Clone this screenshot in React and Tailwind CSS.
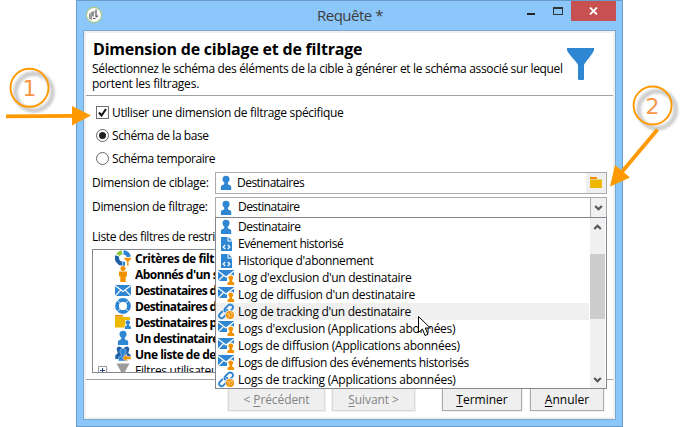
import React from "react";

function PersonIcon() {
  return (
    <svg width="16" height="16" viewBox="0 0 16 16" className="shrink-0" fill="#2f86d2">
      <path d="M8 .8c2.400 0 3.600 1.500 3.600 3.400 0 1.500-.9 2.700-1.900 3.600.1 1.400.5 2 1.500 2.300 1.300.4 2 .9 2 2V15H2.900v-2.900c0-1.100.7-1.600 2-2 1-.3 1.400-.9 1.500-2.300-1-.9-1.900-2.100-1.900-3.600C4.500 2.300 5.600.8 8 .8z" />
    </svg>
  );
}

function FileIcon() {
  return (
    <svg width="16" height="16" viewBox="0 0 16 16" className="shrink-0">
      <path d="M3 1h6.500v4.500H14V15H3z" fill="#2f86d2" />
      <path d="M10.500 1L14 4.500h-3.500z" fill="#2f86d2" />
      <path d="M7.200 9L5.200 11l2 2M9.800 9l2 2-2 2" fill="none" stroke="#fff" strokeWidth="1.200" />
    </svg>
  );
}

function MailPersonIcon() {
  return (
    <svg width="17" height="17" viewBox="0 0 17 17" className="shrink-0">
      <path d="M0 1h16v11H0z" fill="#2f86d2" />
      <path d="M0 2l8 6 8-6M0 12l5.500-5.500M16 12l-5.500-5.500" fill="none" stroke="#fff" strokeWidth="1.200" />
      <path d="M9 12.500V9.500A3.600 3.600 0 0 1 16.500 9v3.500z" fill="#fff" />
      <path d="M12.800 6.500a2.500 2.500 0 0 1 1.300 4.600v1.400l2.100 1.200V16H9.500v-2.300l2-1.200v-1.400a2.500 2.500 0 0 1 1.300-4.600z" fill="#f39200" />
    </svg>
  );
}

function LinkIcon() {
  return (
    <svg width="17" height="17" viewBox="0 0 17 17" className="shrink-0">
      <g fill="none" stroke="#2f86d2" strokeWidth="1.900" strokeLinecap="round">
        <path d="M7 8.500C6 7 6.500 6 7.500 5l2.600-2.600c1.200-1.200 2.800-1.100 3.900-.2 1.200 1.200 1.100 2.800.2 3.900l-2.300 2.300" />
        <path d="M9 6.800c1.200 1.400 1 2.600 0 3.700l-3.500 3.900c-1.100 1.100-2.500 1.100-3.600.2-1.200-1.200-1-2.600-.1-3.600l2.500-2.500" />
      </g>
      <circle cx="12" cy="12" r="4.700" fill="#fff" />
      <circle cx="12" cy="12" r="4.100" fill="#f39200" />
      <path d="M9 10.500l2 .5.500 2-1 1.500M12.500 8.500l.5 1.700 2 .8M13 13.500l1.500-1" fill="none" stroke="#fff" strokeOpacity=".8" strokeWidth=".8" />
    </svg>
  );
}

function CriteriaIcon() {
  return (
    <svg width="17" height="17" viewBox="0 0 17 17" className="shrink-0">
      <g fill="none" strokeWidth="4.200">
        <path d="M7 2.300A5.800 5.800 0 0 0 2.900 5" stroke="#8bc63f" />
        <path d="M2.300 6A5.800 5.800 0 0 0 7 13.700" stroke="#1d5fa8" />
        <path d="M8.500 2.300A5.800 5.800 0 0 1 13.800 7" stroke="#2f86d2" />
        <path d="M7.500 13.700h2.500" stroke="#2f86d2" />
      </g>
      <path d="M9 7.500h7.500v1.200l-2.700 3V16h-2v-4.300L9 8.700z" fill="#f39200" stroke="#fff" strokeWidth=".6" />
    </svg>
  );
}

function ManIcon() {
  return (
    <svg width="16" height="16" viewBox="0 0 16 16" className="shrink-0" fill="#f39200">
      <circle cx="8" cy="2.600" r="2.500" />
      <path d="M4 5.500h8v5h-1.300V16H5.300v-5.500H4z" />
    </svg>
  );
}

function MailIcon() {
  return (
    <svg width="16" height="16" viewBox="0 0 16 16" className="shrink-0">
      <path d="M0 3h16v11H0z" fill="#2f86d2" />
      <path d="M0 3.500l8 6 8-6M0 14l5.500-5.700M16 14l-5.500-5.700" fill="none" stroke="#fff" strokeWidth="1.200" />
    </svg>
  );
}

function RingIcon() {
  return (
    <svg width="16" height="16" viewBox="0 0 16 16" className="shrink-0">
      <circle cx="8" cy="8" r="5.900" fill="none" stroke="#2f86d2" strokeWidth="4" />
      <path d="M2 2l12 12M14 2L2 14" stroke="#fff" strokeWidth=".8" />
      <circle cx="8" cy="8" r="3.900" fill="#fff" />
    </svg>
  );
}

function FolderPersonIcon() {
  return (
    <svg width="16" height="16" viewBox="0 0 16 16" className="shrink-0">
      <path d="M0 1h8v1.700H0z" fill="#f08c00" />
      <path d="M0 3h15v10.500H0z" fill="#edb800" />
      <path d="M9.300 16v-3.500l1-1V6H15.500v6l.5 4z" fill="#fff" />
      <path d="M12.800 6.200a2.200 2.200 0 0 1 1.200 4.100v1.100l1.900 1.300V15H9.800v-2.300l1.900-1.300v-1.100a2.200 2.200 0 0 1 1.100-4.100z" fill="#2f86d2" />
    </svg>
  );
}

function GroupIcon() {
  return (
    <svg width="16" height="16" viewBox="0 0 16 16" className="shrink-0">
      <path d="M4.500.5C2.500.5 1.300 2 1.800 4l1 3L.3 9.500V13H7V1.800zM11.500.5c2 0 3.200 1.500 2.700 3.500l-1 3 2.500 2V12H9V1.800z" fill="#1d5fa8" />
      <path d="M8 2.200c2 0 3.100 1.400 3.100 3.200 0 1.300-.6 2.400-1.500 3.200v1.200l2.900 1.600V15h-9v-3.600l2.900-1.600V8.600C5.500 7.800 4.900 6.700 4.900 5.400 4.900 3.600 6 2.200 8 2.200z" fill="#2f86d2" stroke="#cfe4f7" strokeWidth=".5" />
      <path d="M7.500 12l4.200-4v2.600H16v2.900h-4.300V16z" fill="#f39200" stroke="#fff" strokeWidth=".5" />
    </svg>
  );
}

function TriangleIcon() {
  return (
    <svg width="16" height="16" viewBox="0 0 16 16" className="shrink-0" fill="#9b9b9b">
      <path d="M1.500 1.500h13L8.500 12.500h-1z" />
    </svg>
  );
}

function Chevron({ up }) {
  return (
    <svg width="9" height="8" viewBox="0 0 9 8" fill="none" stroke="#555" strokeWidth="2.200">
      {up ? <path d="M1.200 6L4.500 2.700 7.800 6" /> : <path d="M1.200 2L4.500 5.300 7.800 2" />}
    </svg>
  );
}

const OPTIONS = [
  [PersonIcon, "Destinataire", "tracking-[-0.47px]"],
  [FileIcon, "Evénement historisé", "tracking-[-0.47px]"],
  [FileIcon, "Historique d'abonnement", "tracking-[-0.36px]"],
  [MailPersonIcon, "Log d'exclusion d'un destinataire", "tracking-[-0.3px]"],
  [MailPersonIcon, "Log de diffusion d'un destinataire", "tracking-[-0.3px]"],
  [LinkIcon, "Log de tracking d'un destinataire", "tracking-[-0.3px]"],
  [MailPersonIcon, "Logs d'exclusion (Applications abonnées)", "tracking-[-0.27px]"],
  [MailPersonIcon, "Logs de diffusion (Applications abonnées)", "tracking-[-0.25px]"],
  [MailPersonIcon, "Logs de diffusion des événements historisés", "tracking-[-0.37px]"],
  [LinkIcon, "Logs de tracking (Applications abonnées)", "tracking-[-0.25px]"],
];

const FILTERS = [
  [CriteriaIcon, "Critères de filt", "tracking-[-0.42px]"],
  [ManIcon, "Abonnés d'un s", "tracking-[-0.55px]"],
  [MailIcon, "Destinataires d", "tracking-[-0.65px]"],
  [RingIcon, "Destinataires d", "tracking-[-0.65px]"],
  [FolderPersonIcon, "Destinataires p", "tracking-[-0.65px]"],
  [PersonIcon, "Un destinataire", "tracking-[-0.65px]"],
  [GroupIcon, "Une liste de de", "tracking-[-0.5px]"],
];

function Options() {
  return (
    <div className="absolute left-[123px] top-[45px] z-10 flex h-[172px] w-[392px] border border-[#828790] bg-white">
      <ul className="w-[373px]">
        {OPTIONS.map(([Icon, label, spacing], i) => (
          <li key={i} className={`flex h-[17px] items-center ${i === 5 ? "bg-[#f0f0f0]" : ""}`}>
            <span className="ml-[2px] flex w-5 shrink-0 items-center overflow-visible">
              <Icon />
            </span>
            <span className={`whitespace-nowrap ${spacing}`}>{label}</span>
          </li>
        ))}
      </ul>
      <div className="ml-px flex w-[15px] flex-col items-center bg-[#f0f0f0]">
        <div className="flex h-[36px] items-start pt-[5px]"><Chevron up /></div>
        <div className="h-[65px] w-full bg-[#cdcdcd]" />
        <div className="mt-auto pb-[4px]"><Chevron /></div>
      </div>
    </div>
  );
}

function Btn({ first, rest, className, disabled, prefix }) {
  return (
    <button
      className={`flex h-[23px] shrink-0 items-center justify-center border bg-[#efefef] pb-px outline outline-[#f0f0f0] ${
        disabled ? "border-[#d9d9d9] text-[#838383]" : "border-[#acacac] text-black"
      } ${className}`}
    >
      <span className="whitespace-pre">
        {prefix}
        <span className="underline underline-offset-2">{first}</span>
        {rest}
      </span>
    </button>
  );
}

function Callouts() {
  return (
    <svg className="absolute left-0 top-0 z-20" width="688" height="427" viewBox="0 0 688 427">
      <defs>
        <filter id="soft" x="-30%" y="-30%" width="160%" height="160%">
          <feGaussianBlur stdDeviation="1.200" />
        </filter>
      </defs>
      <g fill="none" stroke="#000" strokeOpacity=".19" strokeWidth="5" filter="url(#soft)">
        <circle cx="34" cy="92" r="18.500" />
        <circle cx="657.200" cy="109.700" r="18.500" />
      </g>
      <g fill="none" stroke="#ff9900" strokeWidth="1.900">
        <circle cx="29.500" cy="87.800" r="19" />
        <circle cx="652.600" cy="105.500" r="19" />
      </g>
      <g fill="#f79646" fontFamily="DejaVu Sans, sans-serif" fontSize="22" textAnchor="middle">
        <text x="29.500" y="96">1</text>
        <text x="652.600" y="114">2</text>
      </g>
      <path d="M6 116.300L75 115.800" stroke="#ff9900" strokeWidth="3.800" />
      <path d="M72 106l19 9.500-19 10z" fill="#ff9900" />
      <path d="M657.500 129.500L621 173" stroke="#ff9900" strokeWidth="3.800" />
      <path d="M610 186.500l5-21.500 15 12.500z" fill="#ff9900" />
    </svg>
  );
}

export default function App() {
  return (
    <div className="relative h-[427px] w-[688px] overflow-hidden bg-white font-['Open_Sans','Noto_Sans',sans-serif] text-[12px] leading-[15px] text-black">
      <div className="ml-[76px] flex h-[427px] w-[547px] flex-col border border-[#6a9bc9] bg-[#8cc7fb] px-[6px] pb-[6px]">
        <header className="flex h-[29px] shrink-0 items-start">
          <svg width="18" height="18" viewBox="0 0 18 18" className="ml-[2px] mt-[5px]">
            <circle cx="9" cy="9" r="7.600" fill="#fafafa" stroke="#a5c77c" strokeWidth="1.100" />
            <path d="M4.500 8L8 5.500l1.500.8L6.500 9v4.500l-2-1z" fill="#aaa" stroke="#777" strokeWidth=".7" />
            <path d="M11 3.500v7.500M8 10.500v-3M11.200 11l1.800-1.200M8 12.500h2.500" fill="none" stroke="#555" strokeWidth="1.200" />
          </svg>
          <h1 className="ml-[214px] mt-[4px] w-[130px] text-[15px] leading-[20px] tracking-[-0.5px] text-[#3c3c3c]">Requête *</h1>
          <div className="ml-auto flex h-5 items-start">
            <div className="mr-[18px] mt-[12px] h-[2px] w-2 bg-[#222]" />
            <div className="mr-[8px] mt-[6px] h-2 w-[10px] border border-t-2 border-[#333]" />
            <div className="flex h-5 w-[45px] items-center justify-center bg-[#c75050]">
              <svg width="9" height="8" viewBox="0 0 9 8"><path d="M1 .5l7 7M8 .5l-7 7" stroke="#fff" strokeWidth="1.800" /></svg>
            </div>
          </div>
        </header>

        <div className="flex min-h-0 flex-1 border border-[#7aa7cf] bg-[#f0f0f0] p-[2px]">
          <main className="flex w-full flex-col bg-white">
            <section className="flex h-[63px] shrink-0 border-b border-[#a0a0a0] pl-[6px] pt-[6px]">
              <div className="w-[474px]">
                <h2 className="ml-px whitespace-nowrap text-[16px] font-bold leading-[20px] tracking-[-0.21px]">Dimension de ciblage et de filtrage</h2>
                <div className="mt-[2px] flex flex-col whitespace-nowrap">
                  <p className="tracking-[-0.32px]">Sélectionnez le schéma des éléments de la cible à générer et le schéma associé sur lequel</p>
                  <p className="tracking-[-0.22px]">portent les filtrages.</p>
                </div>
              </div>
              <svg width="29" height="34" viewBox="0 0 29 34" className="mt-[8px]" fill="#2f86d2">
                <path d="M1 1h27v2c-1 4-9 12-10 15v14q0 1-1 1h-4q-1 0-1-1V18C11 15 2 7 1 3z" />
              </svg>
            </section>

            <section className="flex flex-col pl-[10px] pt-[9px]">
              <label className="flex h-[15px] items-center">
                <span className="flex h-[13px] w-[13px] items-center justify-center border border-[#707070]">
                  <svg width="9" height="9" viewBox="0 0 9 9"><path d="M1 4.500l2.500 3L8 1" fill="none" stroke="#111" strokeWidth="2" /></svg>
                </span>
                <span className="ml-[3px] tracking-[-0.32px]">Utiliser une dimension de filtrage spécifique</span>
              </label>
              <label className="mt-[8px] flex h-[15px] items-center">
                <span className="flex h-[13px] w-[13px] items-center justify-center rounded-full border border-[#666]">
                  <span className="h-[7px] w-[7px] rounded-full bg-[#222]" />
                </span>
                <span className="ml-[3px] tracking-[-0.42px]">Schéma de la base</span>
              </label>
              <label className="mt-[8px] flex h-[15px] items-center">
                <span className="h-[13px] w-[13px] rounded-full border border-[#666]" />
                <span className="ml-[3px] tracking-[-0.42px]">Schéma temporaire</span>
              </label>
            </section>

            <section className="mt-[6px] flex flex-col gap-[3px] pl-[6px]">
              <div className="flex h-[22px] items-center">
                <span className="w-[123px] whitespace-nowrap pb-[2px] tracking-[-0.3px]">Dimension de ciblage:</span>
                <div className="flex h-[22px] w-[392px] items-center border border-[#ababab]">
                  <span className="ml-[2px] flex w-[19px]"><PersonIcon /></span>
                  <span className="pb-[2px] tracking-[-0.52px]">Destinataires</span>
                  <span className="ml-auto flex h-full w-5 items-center justify-center bg-[#efefef]">
                    <svg width="12" height="12" viewBox="0 0 12 12"><path d="M0 0h7v2H0z" fill="#f08c00" /><path d="M0 2.500h12V11H0z" fill="#edb800" /></svg>
                  </span>
                </div>
              </div>
              <div className="flex h-[21px] items-center">
                <span className="w-[123px] whitespace-nowrap pb-[3px] tracking-[-0.33px]">Dimension de filtrage:</span>
                <div className="flex h-[21px] w-[392px] items-center border border-[#ababab]">
                  <span className="ml-[2px] flex w-5"><PersonIcon /></span>
                  <span className="pb-[2px] tracking-[-0.55px]">Destinataire</span>
                  <span className="ml-auto flex h-full w-4 items-center justify-center border-l border-[#ababab] bg-[#f0f0f0]"><Chevron /></span>
                </div>
              </div>
            </section>

            <section className="relative ml-[6px] -mt-[46px] pt-[46px]">
              <div className="mt-[11px] w-[123px] whitespace-nowrap tracking-[-0.4px]">Liste des filtres de restri</div>
              <div className="mt-[5px] h-[124px] w-[515px] overflow-hidden border border-[#828790]">
                {FILTERS.map(([Icon, label, spacing], i) => (
                  <div key={i} className="flex h-4 items-center pl-[22px]">
                    <span className="w-5 shrink-0"><Icon /></span>
                    <span className={`whitespace-nowrap font-bold ${spacing}`}>{label}</span>
                  </div>
                ))}
                <div className="flex h-4 items-center pl-[5px]">
                  <svg width="9" height="9" viewBox="0 0 9 9" className="mr-[8px] shrink-0"><path d="M.5.5h8v8h-8z" fill="#fff" stroke="#999" /><path d="M2 4.500h5M4.500 2v5" stroke="#26478a" /></svg>
                  <span className="w-5 shrink-0"><TriangleIcon /></span>
                  <span className="whitespace-nowrap tracking-[-0.3px]">Filtres utilisateu</span>
                </div>
              </div>
              <Options />
            </section>

            <footer className="mt-[6px] flex min-h-0 flex-1 border-t border-[#a0a0a0] pl-[142px] pt-[8px]">
              <Btn prefix="< " first="P" rest="récédent" disabled className="w-[97px] tracking-[-0.1px]" />
              <Btn first="S" rest="uivant >" disabled className="ml-[7px] w-[83px] tracking-[-0.1px]" />
              <Btn first="T" rest="erminer" className="ml-[27px] w-[80px]" />
              <Btn first="A" rest="nnuler" className="ml-[8px] w-[74px]" />
            </footer>
          </main>
        </div>
      </div>

      <svg className="absolute left-[418px] top-[316px] z-20" width="13" height="21" viewBox="0 0 13 21">
        <path d="M.5.5v16l4-3.500 2.500 6.500 3-1.200-2.700-6.300h5z" fill="#fff" stroke="#000" />
      </svg>
      <Callouts />
    </div>
  );
}
